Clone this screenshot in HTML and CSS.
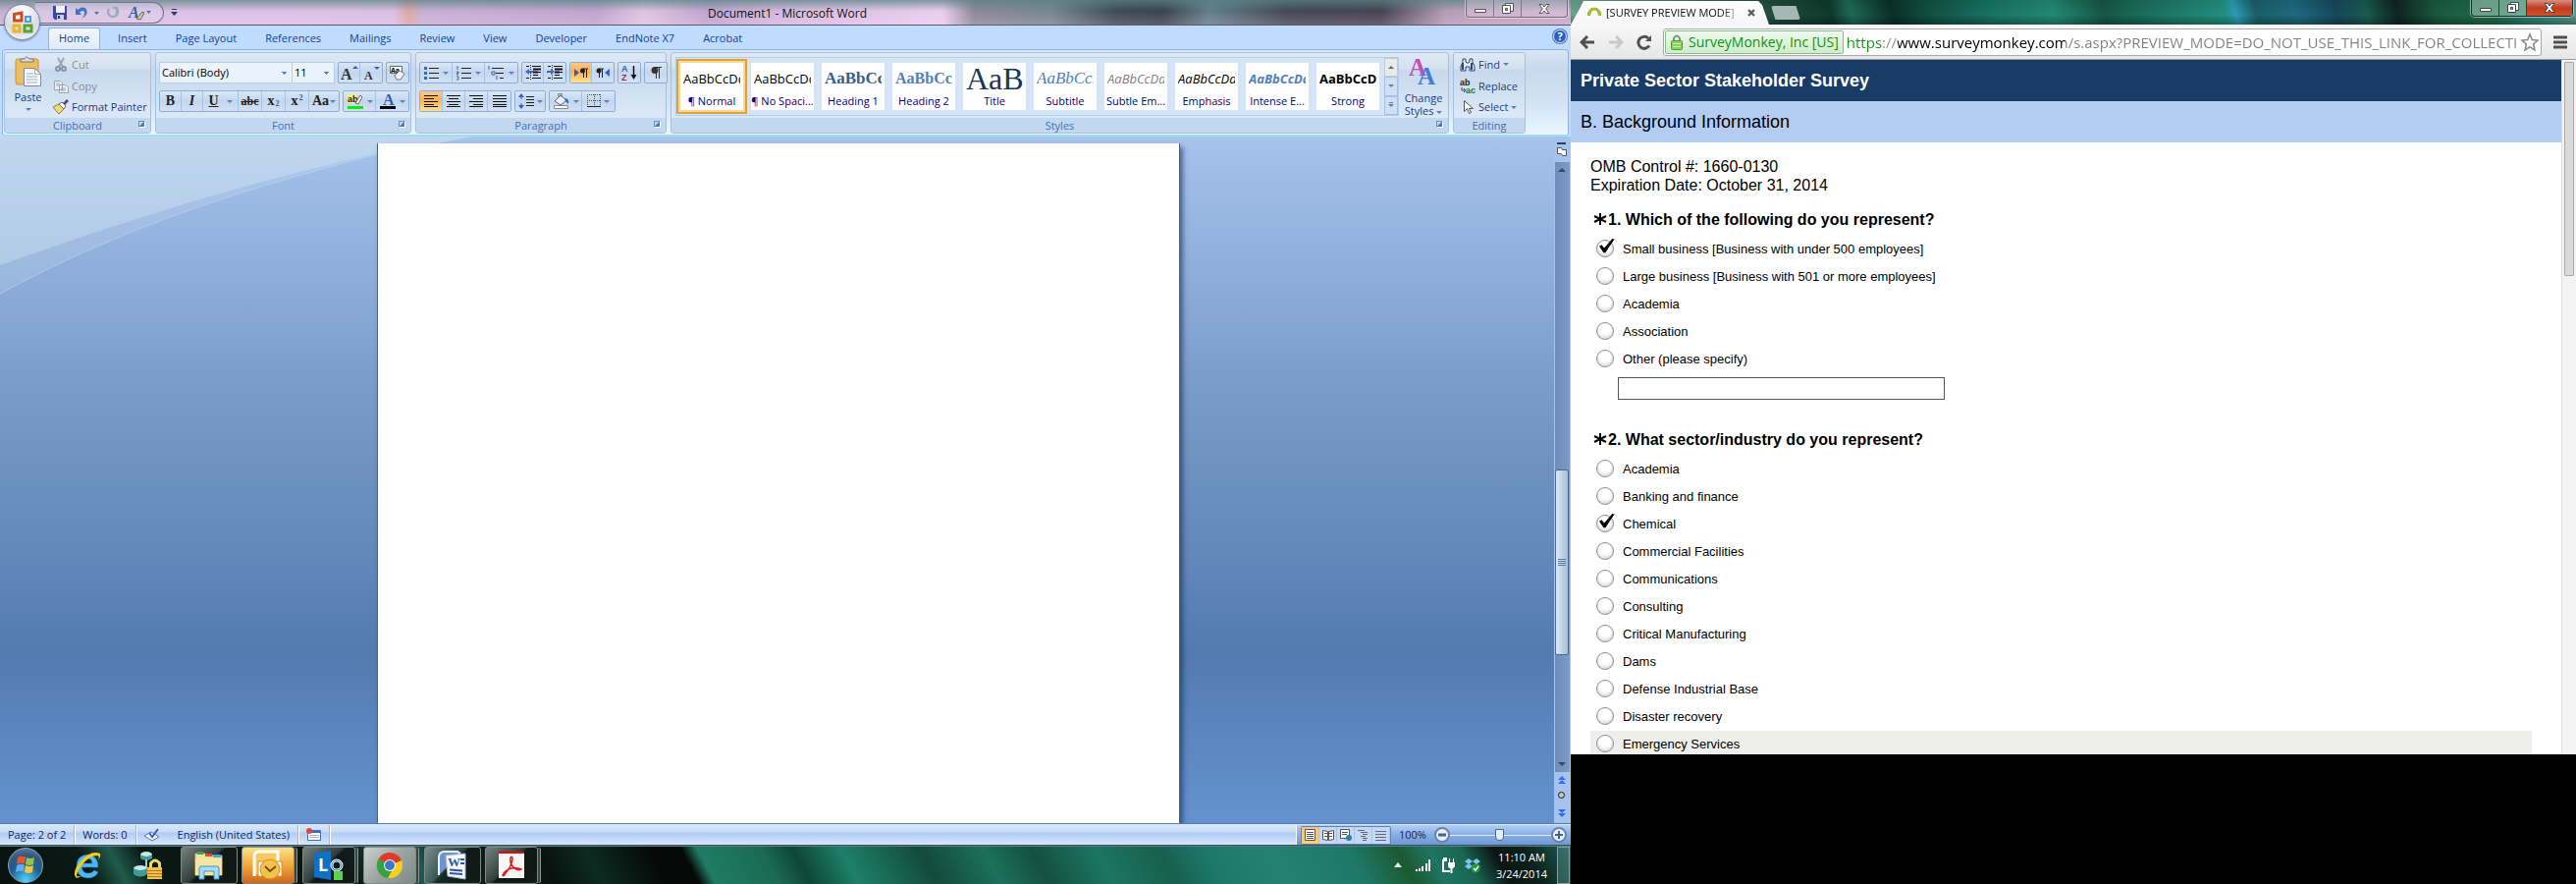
FILE: index.html
```html
<!DOCTYPE html>
<html lang="en">
<head>
    <meta charset="UTF-8">
    <meta name="viewport" content="width=device-width, initial-scale=1.0">
    <title>Desktop</title>
    <link rel="stylesheet" href="styles.css">
</head>
<body>
    <!-- Left monitor: Word + taskbar -->
    <section class="screen screen-left">
        <div class="word">
            <header class="word-title">
                <div class="qat">
                    <button aria-label="Save"><svg width="16" height="16"><path d="M1 1h14v14H3l-2-2z" fill="#3b47a8"/><path d="M4 1h9v7H4z" fill="#f4f6fd"/><path d="M5 10h7v5H5z" fill="#c8cdea"/><path d="M6 11h2v3H6z" fill="#2a3384"/></svg></button>
                    <button aria-label="Undo"><svg width="26" height="16"><path d="M2 3v7h6L6 7.500c3-3 6-1.500 5 2-.5 2-2 3-3 4 4-1.500 6-4 5.500-7C13 2 8 1 4.500 5z" fill="#3f74c8"/><path d="M21 7h5l-2.500 3z" fill="#54719f"/></svg></button>
                    <button aria-label="Repeat"><svg width="16" height="16"><path d="M4 4a5 5 0 1 0 8 0M12 9V3H8" fill="none" stroke="#a0a9c2" stroke-width="2.500"/></svg></button>
                    <button aria-label="Quick styles"><svg width="26" height="18"><text x="2" y="14" class="glyph-a">A</text><path d="M10 15l6-7 2 1-4 7z" fill="#f3c85b" stroke="#47679c"/><path d="M20 7h5l-2.500 3z" fill="#54719f"/></svg></button>
                </div>
                <button class="qat-more" aria-label="Customize"><svg width="7" height="8"><path d="M1 0h5v1H1zM0 3h7L3.500 7z" fill="#25396b"/></svg></button>
                <h1>Document1 - Microsoft Word</h1>
                <div class="win-buttons">
                    <button aria-label="Minimize"><svg width="12" height="10"><path d="M.5 5.500h11v3H.5z" fill="#fff" stroke="#555"/></svg></button>
                    <button aria-label="Restore"><svg width="12" height="12"><path d="M3.500.5h8v8h-8z" fill="#fff" stroke="#555"/><path d="M.5 2.500h8v8h-8z" fill="#fff" stroke="#555"/><path d="M3.500 5.500h2v2h-2z" fill="#bbb" stroke="#555"/></svg></button>
                    <button class="wide" aria-label="Close"><svg width="12" height="10"><path d="M1 .5h3L6 3 8 .5h3L7.700 5 11 9.500H8L6 7 4 9.500H1L4.300 5z" fill="#fff" stroke="#555"/></svg></button>
                </div>
            </header>
            <button class="office-button" aria-label="Office">
                <svg width="24" height="24" fill="none" stroke-width="3"><path d="M3.500 10V3.500L11 2v8z" stroke="#d9471b"/><path d="M15 6h5v5h-5z" stroke="#4a9be0" stroke-width="2"/><path d="M3 15h6v6H3z" stroke="#f0b323"/><path d="M14 15h7v6h-7z" stroke="#5aa32c"/></svg>
            </button>

            <nav class="tabs">
                <button class="active">Home</button>
                <button>Insert</button>
                <button>Page Layout</button>
                <button>References</button>
                <button>Mailings</button>
                <button>Review</button>
                <button>View</button>
                <button>Developer</button>
                <button>EndNote X7</button>
                <button>Acrobat</button>
                <button class="help" aria-label="Help">?</button>
            </nav>

            <div class="ribbon">
                <section class="group clipboard">
                    <div class="group-body">
                        <button class="paste">
                            <svg width="28" height="32"><rect x="1" y="3" width="23" height="26" rx="2" fill="#eebd5e" stroke="#c8923c"/><path d="M6 6V3h4q2-4 5 0h4v3z" fill="#d8dde6" stroke="#777"/><path d="M9.500 12.500h11l6 6V30.500h-17z" fill="#f7faff" stroke="#7a8aa8"/><path d="M20.500 12.500v6h6M12 18h7M12 21h11M12 24h11M12 27h11" fill="none" stroke="#9aabc8"/></svg>
                            Paste
                            <i class="arrow"></i>
                        </button>
                        <div class="stack">
                            <button class="off"><svg width="16" height="16"><path d="M5 1l5 9M11 1L6 10" stroke="#9aa5b8" stroke-width="2"/><g fill="none" stroke="#8793a9" stroke-width="2"><circle cx="5" cy="12" r="2"/><circle cx="11" cy="12" r="2"/></g></svg>Cut</button>
                            <button class="off"><svg width="16" height="16"><path d="M1.500 2.500h6l2 2v7h-8zM6.500 6.500h6l3 2v6h-9z" fill="#eef1f6" stroke="#97a3b8"/><path d="M3 5h4M3 7h3M8 10h5M8 12h5" stroke="#97a3b8"/></svg>Copy</button>
                            <button><svg width="16" height="16"><path d="M0 8l6-3 5 5-5 5z" fill="#f6d977" stroke="#8b7a45"/><path d="M6 5l3-2 4 4-2 3z" fill="#fff" stroke="#666"/><path d="M10 4l4-4 2 2-4 4z" fill="#4d4f7a"/></svg>Format Painter</button>
                        </div>
                    </div>
                    <h2>Clipboard<i class="launcher"></i></h2>
                </section>

                <section class="group font">
                    <div class="group-body rows">
                        <div class="row">
                            <div class="combo">
                                <select class="font-name" aria-label="Font"><option>Calibri (Body)</option></select>
                                <select class="font-size" aria-label="Font size"><option>11</option></select>
                            </div>
                            <div class="btns"><button class="w22" aria-label="Grow font"><svg width="20" height="18"><text x="1" y="16" class="grow">A</text><path d="M13 5h6l-3-3z" fill="#2f63b8"/></svg></button><button class="w22" aria-label="Shrink font"><svg width="20" height="18"><text x="3" y="16" class="shrink">A</text><path d="M13 3h6l-3 3z" fill="#2f63b8"/></svg></button></div>
                            <div class="btns"><button class="w22" aria-label="Clear formatting"><svg width="18" height="18"><path d="M1.500 2.500h12v7h-12z" fill="#fff" stroke="#666"/><text x="2" y="9" class="tiny">Aa</text><path d="M6 12l5-5 5 3-4 6H8z" fill="#f4f4fa" stroke="#778"/></svg></button></div>
                        </div>
                        <div class="row">
                            <div class="btns">
                                <button class="w22 serif"><b>B</b></button><button class="w22 serif"><em>I</em></button><button class="w36 serif"><u>U</u><i class="arrow"></i></button><button class="w24 serif"><s>abc</s></button><button class="w24 serif">x<sub>2</sub></button><button class="w24 serif">x<sup>2</sup></button><button class="w30 serif">Aa<i class="arrow"></i></button>
                            </div>
                            <div class="btns">
                                <button class="w33" aria-label="Highlight"><svg width="18" height="18"><path d="M1 2h9v9H1z" fill="#f6ef78"/><text x="1" y="10" class="ab">ab</text><path d="M9 11l5-8 2 2-4 7z" fill="#fff" stroke="#666"/><path d="M1 14h16v3H1z" fill="#00f000"/></svg><i class="arrow"></i></button><button class="w33" aria-label="Font color"><svg width="18" height="18"><text x="4" y="13" class="glyph-a upright">A</text><path d="M1 14h16v3H1z" fill="#000"/></svg><i class="arrow"></i></button>
                            </div>
                        </div>
                    </div>
                    <h2>Font<i class="launcher"></i></h2>
                </section>

                <section class="group paragraph">
                    <div class="group-body rows">
                        <div class="row">
                            <div class="btns">
                                <button class="w33" aria-label="Bullets"><svg width="16" height="16"><path d="M5 3.500h10M5 8.500h10M5 13.500h10" stroke="#222"/><path d="M0 2h3v3H0zM0 7h3v3H0zM0 12h3v3H0z" fill="#3f68a8"/></svg><i class="arrow"></i></button><button class="w33" aria-label="Numbering"><svg width="16" height="16"><path d="M5 3.500h10M5 8.500h10M5 13.500h10" stroke="#222"/><path d="M1 1v4M0 7h2v1.500H0V10h2M0 12h2v3H0" stroke="#3f68a8" fill="none"/></svg><i class="arrow"></i></button><button class="w33" aria-label="Multilevel list"><svg width="18" height="16"><path d="M4 3.500h6M10 3.500h6M8 8.500h8M12 13.500h4" stroke="#222"/><path d="M1 1v4M4 7h3v3H4zM9 11v4" stroke="#3f68a8" fill="none"/></svg><i class="arrow"></i></button>
                            </div>
                            <div class="btns">
                                <button class="w22" aria-label="Decrease indent"><svg width="16" height="16"><path d="M1 1.500h3M7 1.500h9M1 13.500h3M7 13.500h9M8 4.500h8M8 7.500h8M8 10.500h5" stroke="#111"/><path d="M8 4.500h8M8 7.500h5" stroke="#111" stroke-width="2"/><path d="M5.500 0v16" stroke="#333" stroke-dasharray="1 1"/><path d="M0 7l4-3v2h4v2H4v2z" fill="#3e6cc0"/></svg></button><button class="w22" aria-label="Increase indent"><svg width="16" height="16"><path d="M1 1.500h3M7 1.500h9M1 13.500h3M7 13.500h9M8 4.500h8M8 7.500h8M8 10.500h5" stroke="#111"/><path d="M8 4.500h8M8 7.500h5" stroke="#111" stroke-width="2"/><path d="M5.500 0v16" stroke="#333" stroke-dasharray="1 1"/><path d="M8 7L4 4v2H0v2h4v2z" fill="#3e6cc0"/></svg></button>
                            </div>
                            <div class="btns">
                                <button class="w22 on" aria-label="Left-to-right"><svg width="14" height="12"><path d="M0 2l5 4-5 4z" fill="#2f63c0"/><path d="M9 2h5M9.500 2v9M12.500 2v9" stroke="#222"/><circle cx="8.500" cy="4" r="2.500" fill="#222"/></svg></button><button class="w22" aria-label="Right-to-left"><svg width="14" height="12"><path d="M14 2L9 6l5 4z" fill="#2f63c0"/><path d="M3 2h5M3.500 2v9M6.500 2v9" stroke="#222"/><circle cx="3" cy="4" r="2.500" fill="#222"/></svg></button>
                            </div>
                            <div class="btns"><button class="w22" aria-label="Sort"><svg width="18" height="18"><text x="1" y="8" class="sort-a">A</text><text x="1" y="17" class="sort-z">Z</text><path d="M13.500 2v11" stroke="#111" stroke-width="1.500"/><path d="M10.500 11h6l-3 5z" fill="#111"/></svg></button></div>
                            <div class="btns"><button class="w22" aria-label="Show marks"><svg width="12" height="14"><path d="M4 1.500h8M6.500 1v12M9.500 1v12" stroke="#333" fill="none"/><circle cx="5" cy="4.500" r="3.500" fill="#333"/></svg></button></div>
                        </div>
                        <div class="row">
                            <div class="btns">
                                <button class="w23 on" aria-label="Align left"><svg width="14" height="12"><path d="M0 .5h14M0 3.500h10M0 6.500h14M0 9.500h10M0 11.500h14" stroke="#111"/></svg></button><button class="w23" aria-label="Center"><svg width="14" height="12"><path d="M0 .5h14M2 3.500h10M0 6.500h14M2 9.500h10M0 11.500h14" stroke="#111"/></svg></button><button class="w23" aria-label="Align right"><svg width="14" height="12"><path d="M0 .5h14M4 3.500h10M0 6.500h14M4 9.500h10M0 11.500h14" stroke="#111"/></svg></button><button class="w23" aria-label="Justify"><svg width="14" height="12"><path d="M0 .5h14M0 3.500h14M0 6.500h14M0 9.500h14M0 11.500h14" stroke="#111"/></svg></button>
                            </div>
                            <div class="btns"><button class="w30" aria-label="Line spacing"><svg width="16" height="16"><path d="M3 0l3 4H0zM3 16l3-4H0z" fill="#2f63c0"/><path d="M3 3v3M3 10v3" stroke="#2f63c0"/><path d="M8 3.500h8M8 6.500h8M8 9.500h8M8 12.500h8" stroke="#222"/></svg><i class="arrow"></i></button></div>
                            <div class="btns">
                                <button class="w33" aria-label="Shading"><svg width="18" height="16"><path d="M2 8l6-6 6 5-6 5z" fill="#eef3fb" stroke="#4a6594"/><path d="M6 4V0h3v4" fill="none" stroke="#666"/><path d="M12 5q5 0 4 6l-3-3z" fill="#3567ad"/><path d="M1.500 12.500h14v3h-14z" fill="#fff" stroke="#888"/></svg><i class="arrow"></i></button><button class="w33" aria-label="Borders"><svg width="14" height="14" stroke="#555" stroke-dasharray="1 1"><path d="M0 .5h14M.5 0v13M13.500 0v13M7.500 0v13M0 6.500h14"/><path d="M0 12.500h14" stroke="#222" stroke-dasharray="none"/></svg><i class="arrow"></i></button>
                            </div>
                        </div>
                    </div>
                    <h2>Paragraph<i class="launcher"></i></h2>
                </section>

                <section class="group styles">
                    <div class="group-body">
                        <div class="gallery">
                            <button class="style selected"><span class="sample">AaBbCcDd</span><span>¶ Normal</span></button>
                            <button class="style"><span class="sample">AaBbCcDd</span><span>¶ No Spaci...</span></button>
                            <button class="style"><span class="sample heading heading-1">AaBbCc</span><span>Heading 1</span></button>
                            <button class="style"><span class="sample heading heading-2">AaBbCc</span><span>Heading 2</span></button>
                            <button class="style"><span class="sample title">AaB</span><span>Title</span></button>
                            <button class="style"><span class="sample subtitle">AaBbCc.</span><span>Subtitle</span></button>
                            <button class="style"><span class="sample subtle">AaBbCcDd</span><span>Subtle Em...</span></button>
                            <button class="style"><span class="sample emphasis">AaBbCcDd</span><span>Emphasis</span></button>
                            <button class="style"><span class="sample intense">AaBbCcDd</span><span>Intense E...</span></button>
                            <button class="style"><span class="sample strong">AaBbCcDd</span><span>Strong</span></button>
                            <div class="gallery-nav">
                                <button class="dim" aria-label="Row up"><i class="arrow up"></i></button>
                                <button aria-label="Row down"><i class="arrow"></i></button>
                                <button class="more" aria-label="More styles"><i class="arrow"></i></button>
                            </div>
                        </div>
                        <button class="change">
                            <svg width="30" height="30"><text x="0" y="19" class="big-a pink">A</text><text x="9" y="28" class="big-a blue">A</text></svg>
                            <span>Change<br>Styles <i class="arrow"></i></span>
                        </button>
                    </div>
                    <h2>Styles<i class="launcher"></i></h2>
                </section>

                <section class="group editing">
                    <div class="group-body">
                        <div class="stack">
                            <button><svg width="16" height="16"><path d="M3 2h3v3l1 1h2l1-1V2h3v3l2 5v4h-5v-4H6v4H1v-4l2-5z" fill="#dfe9f8" stroke="#2d4673"/><path d="M3 6v7M12 6v7" stroke="#2d4673" stroke-width="2"/></svg>Find <i class="arrow"></i></button>
                            <button><svg width="16" height="16"><text x="0" y="7" class="ab">ab</text><text x="6" y="15" class="ab green">ac</text><path d="M2 9v3h4M4 10l2 2-2 2" fill="none" stroke="#2d4673"/></svg>Replace</button>
                            <button><svg width="16" height="16"><path d="M4.500 1.500v11l3-3 2 5 2-1-2-4h4z" fill="#fff" stroke="#555"/></svg>Select <i class="arrow"></i></button>
                        </div>
                    </div>
                    <h2>Editing</h2>
                </section>
            </div>

            <main class="workspace">
                <svg class="swoosh" width="480" height="164"><path d="M0 160C120 95 240 55 385 18L480 0H0z" fill="#fff" opacity=".13"/><path d="M0 131C130 85 240 50 385 17L480 0H0z" fill="#e4f2f8" opacity=".3"/><path d="M0 160C120 95 240 55 385 18L480 0" fill="none" stroke="#c8dcf4" opacity=".5"/></svg>
                <div class="page-area"><article class="page"></article></div>
                <div class="scroll">
                    <div class="split"><svg width="12" height="16"><path d="M1 1h9v2H1z" fill="#2b3f66"/><path d="M1.500 6.500h4l1 2h4v6h-4l-1-2h-4z" fill="#f4f7fc" stroke="#555"/></svg></div>
                    <div class="track">
                        <i class="arrow up"></i>
                        <div class="thumb"></div>
                        <i class="arrow"></i>
                    </div>
                    <div class="browse">
                        <svg width="10" height="46"><path d="M5 4L1 8h8zM5 8l-4 4h8z" fill="#2f6ff0"/><circle cx="4.500" cy="23.500" r="3" fill="#c8c8c8" stroke="#111"/><path d="M5 42l-4-4h8zM5 46l-4-4h8z" fill="#2f6ff0"/></svg>
                    </div>
                </div>
            </main>

            <footer class="status">
                <span class="cell">Page: 2 of 2</span>
                <span class="cell">Words: 0</span>
                <span class="cell proof"><svg width="16" height="14"><path d="M0 8l7-4 8 5-7 4z" fill="#f4f6fa" stroke="#5f789f"/><path d="M5 5l3 4 6-8" fill="none" stroke="#3563c4" stroke-width="2"/></svg>English (United States)</span>
                <span class="cell macro"><svg width="15" height="14"><path d="M1.500 2.500h13v10h-13z" fill="#fff" stroke="#4969a8"/><path d="M2 3h12v2H2z" fill="#4969c8"/><path d="M3 7.500h10M3 9.500h10" stroke="#a9b8d6"/><circle cx="3" cy="3" r="3" fill="#dd4a30"/></svg></span>
                <div class="status-right">
                    <div class="views">
                        <button class="on" aria-label="Print layout"><svg width="11" height="12"><path d="M.5.5h10v11H.5z" fill="#fff" stroke="#555"/><path d="M2 3.500h7M2 5.500h7M2 7.500h7M2 9.500h7" stroke="#555"/></svg></button>
                        <button aria-label="Full screen reading"><svg width="12" height="12"><path d="M.5 1.500l5 1v9l-5-1zM11.500 1.500l-5 1v9l5-1z" fill="#fff" stroke="#555"/><path d="M2 4.500h3M2 7.500h3M7 4.500h3M7 7.500h3" stroke="#555"/></svg></button>
                        <button aria-label="Web layout"><svg width="12" height="12"><path d="M.5.5h9v9h-9z" fill="#fff" stroke="#555"/><path d="M2 3.500h6M2 5.500h5" stroke="#555"/><circle cx="9" cy="9" r="3" fill="#2f7f9f"/></svg></button>
                        <button aria-label="Outline"><svg width="11" height="11"><path d="M0 .5h7M3 2.500h7M5 4.500h5M3 6.500h5M5 8.500h5M5 10.500h4" stroke="#667"/></svg></button>
                        <button aria-label="Draft"><svg width="11" height="11"><path d="M0 1.500h11M0 4.500h11M0 7.500h11M0 10.500h11" stroke="#667"/></svg></button>
                    </div>
                    <label for="zoom">100%</label>
                    <button class="round" aria-label="Zoom out"><svg width="10" height="10"><path d="M1 3.500h8v3H1z" fill="#4b6088"/></svg></button>
                    <input type="range" id="zoom" min="0" max="200" value="98">
                    <button class="round" aria-label="Zoom in"><svg width="10" height="10"><path d="M1 4h8v2H1zM4 1h2v8H4z" fill="#4b6088"/></svg></button>
                </div>
            </footer>
        </div>

        <div class="taskbar">
            <button class="start" aria-label="Start"><svg width="24" height="24"><path d="M4 4q4-2 8-.5l-1 7q-4-1.500-8 .5z" fill="#e2572b"/><path d="M13 4q4 2 8 0l-1 7q-4 2-8 0z" fill="#93c44a"/><path d="M3 12q4-2 8-.5l-1 7q-4-1.500-8 .5z" fill="#5fb0ea"/><path d="M12 12q4 2 8 0l-1 7q-4 2-8 0z" fill="#f6c43c"/></svg></button>
            <button class="pin" aria-label="Internet Explorer"><svg width="30" height="32"><path d="M26 18H9.500q.5 6 6.500 6 4 0 6-3l4 2q-3 6-11 6Q4 28 4 17T15 5q11 1 11 13zM10 14h10q-.5-5-5-5t-5 5z" fill="#4cb8f0" stroke="#1c6fb8" stroke-width=".5"/><path d="M3 28Q-1 22 9 11T28 4q1 3-2 7 2-5-1-5-7 0-14 8T4 27q3 1 6-1-5 4-7 2z" fill="#fbc91c"/></svg></button>
            <button class="pin" aria-label="VPN"><svg width="30" height="32"><ellipse cx="13" cy="5" rx="6" ry="3" fill="#c9e7e3"/><path d="M7 5v4q6 4 12 0V5q-6 4-12 0z" fill="#3c9d98"/><path d="M12 10h2v8h-2z" fill="#9fd0c9"/><ellipse cx="7" cy="19" rx="7" ry="3" fill="#c9e7e3"/><path d="M0 19v6q7 5 14 0v-6q-7 4-14 0z" fill="#3c9d98"/><path d="M17.500 19v-5q4.500-6 9 0v5" fill="none" stroke="#f2d95c" stroke-width="3"/><path d="M14 18h15v12H14z" fill="#f0c24a"/><path d="M14 21.500h15M14 24.500h15M14 27.500h15" stroke="#b07a18"/></svg></button>
            <button class="task first" aria-label="Explorer"><svg width="32" height="32"><path d="M2 4h10l2 2h15v20H2z" fill="#f3e3a2" stroke="#c9b068"/><path d="M4 2h6v3H4z" fill="#3fa04a"/><path d="M12 4h7v3h-7z" fill="#e0483a"/><path d="M20 5h8v3h-8z" fill="#4aa0d8"/><path d="M2 9h27v17H2z" fill="#f6e6a4"/><path d="M6 30V19q0-2 2-2h16q2 0 2 2v11h-5v-8H11v8z" fill="#a7dcf3" stroke="#3f94c4"/></svg></button>
            <button class="task outlook multi" aria-label="Outlook"><svg width="32" height="32"><path d="M2 27V7q0-5 5-5h19v12" fill="#f6c860" stroke="#fff" stroke-width="3"/><path d="M6 12h24v15H6z" fill="#fff" stroke="#d89028"/><circle cx="18" cy="20" r="10" fill="#f6c24a" stroke="#d68a1c"/><path d="M13 17l5 5 6-5" fill="none" stroke="#7a4a08" stroke-width="2"/></svg></button>
            <button class="task multi" aria-label="Lync"><svg width="32" height="32"><path d="M1 4l17-3v30L1 28z" fill="#0d72c6"/><text x="5" y="22" class="lync">L</text><circle cx="24" cy="16" r="5" fill="none" stroke="#fff" stroke-width="3"/><circle cx="24" cy="16" r="5" fill="none" stroke="#0d72c6"/><path d="M21 22h9v9h-9z" fill="#5fd14e"/></svg></button>
            <button class="task lit multi" aria-label="Chrome"><svg width="28" height="28"><circle cx="14" cy="14" r="13" fill="#f7cf1c"/><path d="M14 14L2.500 8A13 13 0 0 1 26 9z" fill="#dd3a2c"/><path d="M14 14L2.500 7.500A13 13 0 0 0 12 27l6-11z" fill="#3a9e43"/><circle cx="14" cy="14" r="6" fill="#fff"/><circle cx="14" cy="14" r="5" fill="#3a78c8"/></svg></button>
            <button class="task" aria-label="Word"><svg width="32" height="32"><path d="M2 26V8q0-6 6-6h13l3 2" fill="#6f93cf" stroke="#e9f0fb" stroke-width="2"/><path d="M9 6l20-2v26L11 27z" fill="#f6f9ff" stroke="#a9badb"/><text x="11" y="17" class="word-w">W</text><path d="M13 20.500l13 1M13 24l13 1M24 10h4M24 14h4" stroke="#2b56a8" stroke-width="2"/></svg></button>
            <button class="task multi" aria-label="Acrobat"><svg width="28" height="28"><path d="M1 1h26v26H1z" fill="#f8f6f4"/><path d="M1 0h26v2H1z" fill="#d80f0f"/><path d="M5 24q2-5 9-7 5-1 10 1-3 2-7-1-5-4-4-11 2-2 2 2-1 7-7 14-2 4-3 2z" fill="none" stroke="#d81a1a" stroke-width="1.500"/></svg></button>
            <div class="tray">
                <svg width="8" height="6"><path d="M4 0l4 5H0z" fill="#e8f1ef"/></svg>
                <svg width="16" height="12"><path d="M0 10h2v2H0zM3 9h2v3H3zM6 7h2v5H6zM10 4h2v8h-2zM13 0h2v12h-2z" fill="#fff"/></svg>
                <svg width="14" height="16"><path d="M6 3H2v11h7" fill="none" stroke="#fff" stroke-width="2"/><path d="M2 0h4v2H2zM7 5h7v4q-1 2-2.500 2v5h-2v-5Q7 11 7 9zM8 1h1v4H8zM12 1h1v4h-1z" fill="#fff"/></svg>
                <svg width="16" height="16"><path d="M4 1l4 3-4 3-4-3zM12 1l4 3-4 3-4-3zM4 6l4 3-4 3-4-3zM12 6l4 3-4 3-4-3z" fill="#7cc4f5"/><circle cx="11" cy="11" r="4.500" fill="#27983a"/><path d="M9 11l2 2 3-4" fill="none" stroke="#fff" stroke-width="1.500"/></svg>
                <div class="clock">11:10 AM<br>3/24/2014</div>
                <button class="show-desktop" aria-label="Show desktop"></button>
            </div>
        </div>
    </section>

    <!-- Right monitor: Chrome -->
    <section class="screen screen-right">
        <div class="chrome">
            <header class="tabstrip">
                <div class="tab">
                    <svg width="14" height="16"><path d="M2 10q0-6 5-6t5 6" fill="none" stroke="#a3bf2f" stroke-width="3"/><path d="M0 7h3v4H0zM11 7h3v4h-3z" fill="#a3bf2f"/></svg>
                    <span>[SURVEY PREVIEW MODE]</span>
                    <button aria-label="Close tab"><svg width="8" height="8"><path d="M1 1l6 6M7 1L1 7" stroke="#555" stroke-width="2"/></svg></button>
                </div>
                <button class="new-tab" aria-label="New tab"></button>
                <div class="win-buttons glass">
                    <button aria-label="Minimize"><svg width="12" height="10"><path d="M.5 5.500h11v3H.5z" fill="#fff" stroke="#444"/></svg></button>
                    <button aria-label="Restore"><svg width="12" height="12"><path d="M3.500.5h8v8h-8z" fill="#fff" stroke="#444"/><path d="M.5 2.500h8v8h-8z" fill="#fff" stroke="#444"/><path d="M3.500 5.500h2v2h-2z" fill="#9bb" stroke="#444"/></svg></button>
                    <button class="wide close" aria-label="Close"><svg width="12" height="10"><path d="M1 .5h3L6 3 8 .5h3L7.700 5 11 9.500H8L6 7 4 9.500H1L4.300 5z" fill="#fff" stroke="#444"/></svg></button>
                </div>
            </header>
            <div class="toolbar">
                <button aria-label="Back"><svg width="16" height="14"><path d="M2 7h13M8 1L2 7l6 6" fill="none" stroke="#505050" stroke-width="3"/></svg></button>
                <button aria-label="Forward"><svg width="16" height="14"><path d="M1 7h13M8 1l6 6-6 6" fill="none" stroke="#c8c8c8" stroke-width="3"/></svg></button>
                <button aria-label="Reload"><svg width="16" height="16"><path d="M13 11.500A6 6 0 1 1 12 4" fill="none" stroke="#505050" stroke-width="3"/><path d="M9 7h6V1z" fill="#505050"/></svg></button>
                <div class="omnibox">
                    <span class="cert"><svg width="12" height="16"><path d="M3 7V4q3-5 6 0v3" fill="none" stroke="#8a8f8a" stroke-width="2"/><rect x=".5" y="6.500" width="11" height="9" rx="1" fill="#8fd160" stroke="#4f9a35"/><path d="M2 9.500h8M2 12.500h8" stroke="#c4ecaa"/></svg>SurveyMonkey, Inc [US]</span>
                    <input type="text" aria-label="Address" value="https://www.surveymonkey.com/s.aspx?PREVIEW_MODE=DO_NOT_USE_THIS_LINK_FOR_COLLECTION">
                    <button aria-label="Bookmark"><svg width="20" height="20"><path d="M10 2l2.300 5.500 5.700.5-4.300 4 1.300 6-5-3.200L5 18l1.300-6L2 8l5.700-.5z" fill="#fff" stroke="#888" stroke-width="1.500"/></svg></button>
                </div>
                <button class="menu" aria-label="Menu"><svg width="14" height="14"><path d="M1 2h12M1 7h12M1 12h12" stroke="#505050" stroke-width="3" stroke-linecap="round"/></svg></button>
            </div>
            <div class="viewport">
                <form class="survey">
                    <h1>Private Sector Stakeholder Survey</h1>
                    <h2>B. Background Information</h2>
                    <div class="survey-body">
                        <p>OMB Control #: 1660-0130<br>Expiration Date: October 31, 2014</p>
                        <fieldset>
                            <legend><svg width="14" height="14"><path d="M7 1v12M1 4l12 6M13 4L1 10" stroke="#000" stroke-width="2"/></svg>1. Which of the following do you represent?</legend>
                            <label><input type="radio" name="represent" checked>Small business [Business with under 500 employees]</label>
                            <label><input type="radio" name="represent">Large business [Business with 501 or more employees]</label>
                            <label><input type="radio" name="represent">Academia</label>
                            <label><input type="radio" name="represent">Association</label>
                            <label><input type="radio" name="represent">Other (please specify)</label>
                            <input type="text" class="other" aria-label="Other (please specify)">
                        </fieldset>
                        <fieldset>
                            <legend><svg width="14" height="14"><path d="M7 1v12M1 4l12 6M13 4L1 10" stroke="#000" stroke-width="2"/></svg>2. What sector/industry do you represent?</legend>
                            <label><input type="radio" name="sector">Academia</label>
                            <label><input type="radio" name="sector">Banking and finance</label>
                            <label><input type="radio" name="sector" checked>Chemical</label>
                            <label><input type="radio" name="sector">Commercial Facilities</label>
                            <label><input type="radio" name="sector">Communications</label>
                            <label><input type="radio" name="sector">Consulting</label>
                            <label><input type="radio" name="sector">Critical Manufacturing</label>
                            <label><input type="radio" name="sector">Dams</label>
                            <label><input type="radio" name="sector">Defense Industrial Base</label>
                            <label><input type="radio" name="sector">Disaster recovery</label>
                            <label class="hover"><input type="radio" name="sector">Emergency Services</label>
                        </fieldset>
                    </div>
                </form>
                <div class="page-scroll"><div></div></div>
            </div>
        </div>
    </section>
</body>
</html>
```
FILE: styles.css
```css
:root {
    --ink: #1e3c7b;
    --ribbon-border: #8db2e3;
    --ui: 'Open Sans', 'Noto Sans', sans-serif;
    --web: 'Liberation Sans', Arial, sans-serif;
}

* {
    box-sizing: border-box;
    margin: 0;
    padding: 0;
}

body {
    display: grid;
    grid-template-columns: 25fr 16fr;
    height: 100vh;
    background: #000;
    overflow: hidden;
    font-family: var(--ui);
    font-size: 11px;
    line-height: 16px;
}

button, select, input {
    font: inherit;
    color: inherit;
    border: none;
    background: none;
}

button {
    display: flex;
    align-items: center;
    justify-content: center;
    white-space: nowrap;
}

svg {
    display: block;
    flex: none;
}

.screen {
    min-width: 0;
    min-height: 0;
    display: flex;
    flex-direction: column;
}

.arrow {
    display: inline-block;
    flex: none;
    border: 3px solid transparent;
    border-top-color: #5b81b8;
    border-bottom: none;
    vertical-align: middle;
}

.arrow.up {
    border-top: none;
    border-bottom: 3px solid #5b6b88;
}

/* Word window */
.word {
    position: relative;
    flex: 1;
    min-height: 0;
    display: flex;
    flex-direction: column;
    background: #bfdbff;
    color: var(--ink);
}

.word-title {
    height: 26px;
    display: flex;
    align-items: flex-start;
    padding-right: 3px;
    border-bottom: 1px solid #5a5a68;
    background:
        linear-gradient(rgba(90, 130, 135, 0.75), rgba(150, 150, 170, 0.1) 45%, rgba(230, 200, 235, 0.25)),
        linear-gradient(90deg, #cdb3d4, #e4c5ee 12%, #e2c4ea 25%, #e3a9a4 26%, #cdb3da 27%, #c2a7cf 38%, #e6c9e6 41%, #c3a6d0 45%, #dcbfe4 50%, #f2d4f6 60%, #8b8795 62%, #70858e 67%, #35434a 71%, #2f3a40 74%, #5c7d86 77%, #3a3f48 82%, #3c3a45 88%, #b79db6 92%, #cfaac9);
}

.word-title h1 {
    flex: 1;
    padding: 6px 70px 0 0;
    text-align: center;
    color: #111;
    font-size: 12px;
    font-weight: 400;
    line-height: 16px;
}

.qat {
    display: flex;
    align-items: center;
    gap: 6px;
    height: 22px;
    margin: 2px 0 0 36px;
    padding: 0 11px 0 17px;
    border: 1px solid #77708a;
    border-left: none;
    border-radius: 0 11px 11px 0;
    background: rgba(225, 215, 238, 0.5);
}

.qat-more {
    margin: 9px 0 0 7px;
}

.glyph-a {
    font: italic bold 16px 'Liberation Serif', serif;
    fill: #3060a8;
}

.glyph-a.upright {
    font-style: normal;
}

.office-button {
    position: absolute;
    top: 4px;
    left: 4px;
    width: 37px;
    height: 37px;
    border: 1px solid #7d8798;
    border-radius: 50%;
    background: radial-gradient(circle at 50% 20%, #fff, #d5dbe6 60%, #f4f6fa 90%);
    box-shadow: 0 1px 2px rgba(30, 50, 90, 0.5);
}

.win-buttons {
    display: flex;
    height: 18px;
    margin-left: auto;
    border: 1px solid #6f6a7a;
    border-top: none;
    border-radius: 0 0 4px 4px;
    background: rgba(240, 225, 245, 0.3);
    box-shadow: 0 0 0 1px rgba(255, 255, 255, 0.5);
}

.win-buttons button {
    width: 28px;
    border-right: 1px solid #807b8a;
}

.win-buttons .wide {
    width: 46px;
    border-right: none;
}

.tabs {
    display: flex;
    gap: 7px;
    height: 24px;
    padding: 2px 4px 0 49px;
}

.tabs button {
    padding: 0 11px 1px;
    color: #15428b;
}

.tabs .active {
    border: 1px solid #8db2e3;
    border-bottom: none;
    border-radius: 3px 3px 0 0;
    padding: 0 10px 1px;
    background: linear-gradient(#f2f7fd, #e0ebf8);
}

.tabs .help {
    width: 14px;
    height: 14px;
    margin: 2px 0 0 auto;
    padding: 0;
    border: 1px solid #dce8fa;
    border-radius: 50%;
    background: #2a5fc8;
    box-shadow: 0 0 0 1px #5577b0;
    color: #fff;
    font-weight: 700;
}

.ribbon {
    display: flex;
    gap: 4px;
    height: 89px;
    margin: 0 2px;
    padding: 2px 1px 1px;
    border: 1px solid var(--ribbon-border);
    border-bottom: 2px solid #9fdcec;
    border-radius: 4px;
    background: linear-gradient(#dbe6f4, #c9d9ed 20%, #d2e2f3 60%, #e8f7fe);
}

.group {
    display: flex;
    flex-direction: column;
    border: 1px solid #a5c1e0;
    border-radius: 3px;
    background: linear-gradient(#dfe9f5, #d4e1f1 20%, #c8d9ed 21%, #d9e7f6 75%);
}

.group-body {
    flex: 1;
    display: flex;
    min-height: 0;
}

.group h2 {
    position: relative;
    height: 15px;
    background: #c2d8f0;
    color: #4a6fae;
    font-size: 11px;
    font-weight: 400;
    line-height: 15px;
    text-align: center;
}

.launcher {
    position: absolute;
    right: 5px;
    top: 3px;
    width: 7px;
    height: 7px;
    border: 1px solid #6d8fbf;
    border-right-color: #fff;
    border-bottom-color: #fff;
    background: linear-gradient(135deg, transparent 40%, #5578aa 41%);
}

.clipboard { width: 150px; }
.font { width: 261px; }
.paragraph { width: 256px; }
.styles { width: 793px; }
.editing { width: 74px; }

.paste {
    width: 47px;
    padding-top: 3px;
    flex-direction: column;
}

.paste svg {
    margin-bottom: 2px;
}

.paste .arrow {
    margin: 3px 0 7px;
}

.stack {
    display: flex;
    flex-direction: column;
    padding-top: 1px;
}

.stack button {
    gap: 3px;
    height: 22px;
    justify-content: flex-start;
}

.editing .stack {
    padding-left: 6px;
}

.clipboard .stack {
    padding-left: 2px;
}

.stack .off {
    color: #8d8d8d;
}

.rows {
    flex-direction: column;
    gap: 7px;
    padding: 9px 3px 0;
}

.row {
    display: flex;
    gap: 3px;
}

.combo {
    display: flex;
}

.combo select {
    height: 22px;
    padding-left: 2px;
    border: 1px solid #b6cde8;
    appearance: none;
    color: #000;
    background: conic-gradient(from -45deg at 50% 100%, #5b81b8 90deg, transparent 0) no-repeat right 5px center / 5px 3px, #eaf2fb;
    font-size: 11px;
}

.combo .font-name { width: 136px; }
.combo .font-size { width: 43px; border-left: none; }

.btns {
    display: flex;
    height: 22px;
    border: 1px solid #8eadd6;
    border-radius: 2px;
    background: linear-gradient(#d9e7f7, #c3d6ee 50%, #d2e2f5);
}

.btns button {
    gap: 3px;
    border-right: 1px solid #a9c2e2;
}

.btns button:last-child {
    border-right: none;
}

.btns .on {
    background: linear-gradient(#f9c88a, #fdb055 45%, #fee28e);
}

.w22 { width: 22px; }
.w23 { width: 23px; }
.w24 { width: 24px; }
.w30 { width: 30px; }
.w33 { width: 33px; }
.w36 { width: 36px; }

.serif {
    font-family: 'Liberation Serif', serif;
    font-size: 14px;
    font-weight: 700;
    color: #222;
}

.btns .serif {
    gap: 1px;
}

.btns .w36 {
    gap: 8px;
}

.grow { font: bold 16px 'Liberation Serif', serif; fill: #333; }
.shrink { font: bold 12px 'Liberation Serif', serif; fill: #333; }

.serif sup, .serif sub {
    font-size: 8px;
    line-height: 8px;
    color: #2f63b8;
}

.serif sup { align-self: flex-start; margin-top: 3px; }
.serif sub { align-self: flex-end; margin-bottom: 3px; }
.serif s { font-size: 12px; }

.tiny { font: bold 7px var(--ui); }
.ab { font: bold 9px var(--web); fill: #222; }
.ab.green { fill: #1b7a2b; }
.sort-a { font: bold 9px var(--web); fill: #2f63b8; }
.sort-z { font: bold 9px var(--web); fill: #a43232; }

.styles .group-body {
    padding: 4px 0 0 4px;
}

.gallery {
    display: flex;
    width: 737px;
    height: 60px;
    border: 1px solid #b4cdea;
    background: #d5e5f7;
}

.style {
    width: 64px;
    height: 48px;
    margin: 5px 4px 0;
    flex: none;
    flex-direction: column;
    justify-content: flex-end;
    background: #fff;
    color: #00007a;
}

.style span {
    width: 64px;
    height: 18px;
    line-height: 18px;
}

.style .sample {
    width: 58px;
    height: 26px;
    line-height: 24px;
    overflow: hidden;
    text-align: left;
    font-size: 13px;
    color: #000;
}

.style.selected {
    box-shadow: 0 0 0 2px #fbd98f, 0 0 0 4px #e0a13a;
}

.style .heading { font: bold 17px/24px 'Liberation Serif', serif; }
.style .heading-1 { color: #365f91; }
.style .heading-2 { color: #4f81bd; font-size: 16px; }
.style .title { font: 32px/24px 'Liberation Serif', serif; color: #17365d; }
.style .subtitle { font: italic 17px/24px 'Liberation Serif', serif; color: #4f81bd; }
.style .subtle { font-style: italic; color: #808080; }
.style .emphasis { font-style: italic; }
.style .intense { font-style: italic; font-weight: 700; color: #4f81bd; }
.style .strong { font-weight: 700; }

.gallery-nav {
    width: 14px;
    margin-left: auto;
    display: flex;
    flex-direction: column;
}

.gallery-nav button {
    flex: 1;
    border: 1px solid #a4c0e6;
    background: #cfe0f5;
}

.gallery-nav .dim {
    border-color: #c5c9d0;
    background: #e9eaec;
}

.gallery-nav .more .arrow {
    box-shadow: 0 -3px 0 -1px #5b81b8;
}

.change {
    flex: 1;
    flex-direction: column;
    justify-content: flex-start;
    line-height: 13px;
    gap: 5px;
}

.big-a { font: bold 25px 'Liberation Serif', serif; }
.pink { fill: #c04fb8; }
.blue { fill: #3f7fd8; }

/* Document area */
.workspace {
    position: relative;
    flex: 1;
    min-height: 0;
    display: flex;
    background: linear-gradient(#a6c4ec, #a0bee7 4%, #8aabd8 23%, #7c9ecc 34%, #6b8fbf 51%, #6085b8 64%, #527baf 75%, #6592cf);
}

.swoosh {
    position: absolute;
    top: 0;
    left: 0;
}

.page-area {
    position: relative;
    flex: 1;
    display: flex;
    justify-content: center;
    padding: 7px 0 0 2px;
    overflow: hidden;
}

.page {
    width: 818px;
    border: solid #4e5f78;
    border-width: 0 1px;
    background: #fff;
    box-shadow: 3px 4px 5px rgba(20, 40, 80, 0.6);
}

.scroll {
    width: 17px;
    display: flex;
    flex-direction: column;
    align-items: center;
    border-right: 1px solid #a9c6f4;
    background: #a6c3ee;
}

.split {
    padding: 5px 0;
}

.track {
    flex: 1;
    width: 15px;
    display: flex;
    flex-direction: column;
    align-items: center;
    padding: 6px 0;
    background: linear-gradient(90deg, #6f8db8, #7a9cc8);
}

.track .arrow {
    border-width: 4px;
    border-top-color: #34466e;
}

.track .arrow.up {
    border-top: none;
    border-bottom: 4px solid #34466e;
}

.track .arrow:last-child {
    border-bottom: none;
}

.thumb {
    width: 14px;
    height: 31%;
    margin: 303px 0 auto;
    border: 1px solid #4d6695;
    border-radius: 2px;
    background:
        repeating-linear-gradient(#5f7ba8 0 1px, transparent 1px 2px) no-repeat center / 8px 7px,
        linear-gradient(90deg, #dce8f6, #a9bed8);
}

.browse {
    height: 52px;
}

.status {
    height: 23px;
    display: flex;
    align-items: stretch;
    padding-top: 1px;
    border-top: 1px solid #567db1;
    border-bottom: 1px solid #35506e;
    background: linear-gradient(#dbe8fb, #c6dbf7 40%, #aecbf2 41%, #d7e6fa);
}

.cell {
    display: flex;
    align-items: center;
    padding: 0 8px;
    border-right: 1px solid #9db9df;
    box-shadow: 1px 0 #fff;
    color: #15285a;
}

.proof { gap: 18px; }

.status-right {
    display: flex;
    align-items: center;
    width: 280px;
    margin-left: auto;
    padding: 0 4px;
    border-left: 1px solid #fff;
    background: linear-gradient(#b3d0f5, #86aee3 50%, #6f99d2);
    color: #15285a;
}

.views {
    display: flex;
    margin-right: 8px;
    border: 1px solid #5b85c0;
    border-radius: 2px;
}

.views button {
    width: 18px;
    height: 17px;
    border-right: 1px solid #a6c3ec;
    background: #c3d8f5;
}

.views .on {
    background: linear-gradient(#f6c488, #fbd06a);
}

.round {
    width: 16px;
    height: 16px;
    margin-left: 8px;
    flex: none;
    border: 2px solid #6784b0;
    border-radius: 50%;
    background: #e8f0fb;
}

.status input[type="range"] {
    flex: 1;
    min-width: 0;
    height: 16px;
    appearance: none;
    background: linear-gradient(#e0ebfa, #e0ebfa) no-repeat center / 100% 1px;
}

.status input[type="range"]::-webkit-slider-thumb {
    appearance: none;
    width: 9px;
    height: 12px;
    border: 1px solid #4a6694;
    border-radius: 1px 1px 5px 5px;
    background: #e3edfa;
}

.status input + .round {
    margin-left: 0;
}

/* Taskbar */
.taskbar {
    display: flex;
    align-items: center;
    height: 39px;
    padding-left: 8px;
    border-top: 1px solid #5d7b78;
    background:
        linear-gradient(62deg, #07120e 0, #0a1a15 6%, #1f5b4a 8%, #0a1814 10%, #0a1310 22%, #1f5a55 27%, #0d2018 29%, #0a120f 35%, #0d2b20 38%, #060908 42%, #060908 44%, #1f7c64 45%, #1b6a52 49%, #0f4636 51%, #1d8068 54%, #17604e 57%, #134a3b 59%, #1c705c 63%, #145041 66%, #1b7661 70%, #185f4e 74%, #1d7a6b 77%, #238273 81%, #1e7767 86%, #1b5a30 89%, #1d7563 91%, #1a6552 93%, #0b1512 95%, #0d211b 97%, #1a5f5a);
}

.start {
    width: 36px;
    height: 36px;
    border: 1px solid #88a5c0;
    border-radius: 50%;
    background: radial-gradient(circle at 50% 95%, #4fd6fb, #1d5f94 45%, #35587a 70%, #6d8aa5);
}

.pin {
    width: 30px;
    margin-left: 30px;
}

.pin + .pin {
    margin-left: 32px;
}

.task {
    width: 58px;
    height: 38px;
    margin-right: 4px;
    border: 1px solid #7d8a87;
    border-radius: 3px;
    background: linear-gradient(135deg, rgba(190, 200, 198, 0.6), rgba(90, 100, 98, 0.5) 45%, rgba(20, 25, 24, 0.6) 50%);
}

.task.first { margin-left: 18px; }

.task.multi {
    width: 54px;
    margin-right: 8px;
    box-shadow: 3px 0 0 -1px #39433f, 4px 0 0 -1px #8a9794;
}

.task.outlook {
    background: linear-gradient(#fbe184, #f0a93c 50%, #d0651c);
}

.task.lit {
    background: linear-gradient(135deg, #cdd2d0, #9aa3a0 50%, #7f8a87);
}

.lync { font: bold 18px var(--ui); fill: #fff; }
.word-w { font: bold 13px 'Liberation Serif', serif; fill: #2b56a8; }

.tray {
    display: flex;
    align-items: center;
    align-self: stretch;
    gap: 10px;
    margin-left: auto;
    color: #fff;
}

.tray svg:first-child {
    margin-right: 4px;
}

.clock {
    margin-left: 6px;
    line-height: 17px;
    text-align: center;
}

.show-desktop {
    align-self: stretch;
    width: 13px;
    margin-right: 1px;
    border: 1px solid #7fa39c;
    background: rgba(120, 170, 165, 0.3);
}

/* Browser */
.chrome {
    height: 85.334%;
    display: flex;
    flex-direction: column;
    background: #fff;
}

.tabstrip {
    display: flex;
    height: 25px;
    padding: 1px 3px 0 0;
    background:
        linear-gradient(rgba(0, 0, 0, 0.1), rgba(0, 0, 0, 0) 60%, rgba(0, 0, 0, 0.3)),
        linear-gradient(75deg, #6aa08c 0 1%, #1d4a3c 21%, #0f3a2b 26%, #1e6a55 28%, #0c2f26 32%, #115243 36%, #197464 42%, #228a73 48%, #175747 53%, #1b6e5c 57%, #229080 65%, #2b9cb4 66%, #1c5f68 68%, #1d6b80 72%, #17485a 76%, #1a5a50 79%, #0f2420 82%, #1a5a40 86%, #1e7050 92%, #2b8574 95%, #5d9a90);
}

.tab {
    display: flex;
    align-items: center;
    gap: 5px;
    width: 204px;
    padding: 0 16px 0 17px;
    background: linear-gradient(#fff, #f6f6f6);
    clip-path: polygon(0 100%, 9px 8px, 13px 0, 191px 0, 195px 4px, 202px 100%);
    color: #111;
}

.tab span {
    flex: 1;
    overflow: hidden;
    white-space: nowrap;
    mask-image: linear-gradient(90deg, #000 85%, transparent);
}

.new-tab {
    width: 30px;
    height: 14px;
    margin-top: 5px;
    background: #a5b8b4;
    border-radius: 3px;
    clip-path: polygon(0 0, 85% 0, 100% 100%, 15% 100%);
}

.glass {
    height: 17px;
    margin-top: -1px;
    border-color: #16302a;
    background: rgba(170, 205, 190, 0.55);
}

.glass button {
    border-color: #24453c;
}

.glass .close {
    background: linear-gradient(#d99080, #c23a20 50%, #d0502c);
}

.toolbar {
    display: flex;
    align-items: center;
    gap: 13px;
    height: 36px;
    padding: 0 9px;
    border-bottom: 1px solid #9d9d9d;
    background: linear-gradient(#f8f8f8, #e6e6e6);
}

.omnibox {
    flex: 1;
    min-width: 0;
    display: flex;
    align-items: center;
    height: 28px;
    margin-left: -2px;
    padding: 1px;
    border: 1px solid #a9a9a9;
    border-radius: 3px;
    background: #fff;
    font-size: 15px;
}

.cert {
    display: flex;
    align-items: center;
    gap: 6px;
    height: 24px;
    padding: 0 4px 0 5px;
    flex: none;
    border: 1px solid #86bf86;
    border-radius: 2px;
    background: linear-gradient(#eef9ee, #cdeecb);
    color: #129012;
    font-size: 14px;
}

/* scheme green, host black, rest of the address grey */
.omnibox input {
    flex: 1;
    min-width: 0;
    height: 24px;
    margin: 0 4px 0 3px;
    color: transparent;
    background: linear-gradient(90deg, #129012 37px, #8a8a8a 37px 52px, #000 52px 223px, #808080 223px);
    background-clip: text;
    -webkit-background-clip: text;
}

.menu {
    margin-left: -1px;
}

.viewport {
    flex: 1;
    min-height: 0;
    display: flex;
}

.survey {
    flex: 1;
    overflow: hidden;
    font-family: var(--web);
    color: #000;
}

.survey h1, .survey h2 {
    height: 42px;
    padding-left: 10px;
    font-size: 18px;
    line-height: 42px;
}

.survey h1 {
    background: #183c66;
    color: #fff;
}

.survey h2 {
    background: #b3ccf2;
    font-weight: 400;
}

.survey-body {
    padding: 15px 30px 0 20px;
    font-size: 16px;
    line-height: 19px;
}

fieldset {
    border: none;
    margin-top: 11px;
}

legend {
    display: flex;
    align-items: center;
    gap: 1px;
    height: 28px;
    margin: 0 0 3px 3px;
    font-weight: 700;
}

.survey label {
    display: flex;
    align-items: center;
    gap: 9px;
    height: 26px;
    margin-bottom: 2px;
    padding-left: 6px;
    font-size: 13px;
}

.survey .hover {
    background: #eeeeec;
}

.survey input[type="radio"] {
    appearance: none;
    width: 18px;
    height: 18px;
    border: 1px solid #8c8c8c;
    border-radius: 50%;
    background: radial-gradient(circle at 50% 35%, #fff 40%, #ccc);
    position: relative;
}

/* tick runs over the edge of the circle */
.survey input[type="radio"]:checked::after {
    content: "";
    position: absolute;
    left: 2px;
    top: -3px;
    width: 16px;
    height: 16px;
    background: #000;
    clip-path: polygon(0 55%, 15% 45%, 32% 65%, 82% 8%, 98% 8%, 40% 95%, 28% 95%);
}

.other {
    display: block;
    width: 333px;
    height: 23px;
    margin: 6px 0 15px 28px;
    border: 1px solid #555;
}

.page-scroll {
    width: 15px;
    padding: 2px;
    border-left: 1px solid #ddd;
    background: #f3f3f3;
}

.page-scroll div {
    height: 31%;
    border: 1px solid #aaa;
    border-radius: 1px;
    background: #dadada;
}
```
